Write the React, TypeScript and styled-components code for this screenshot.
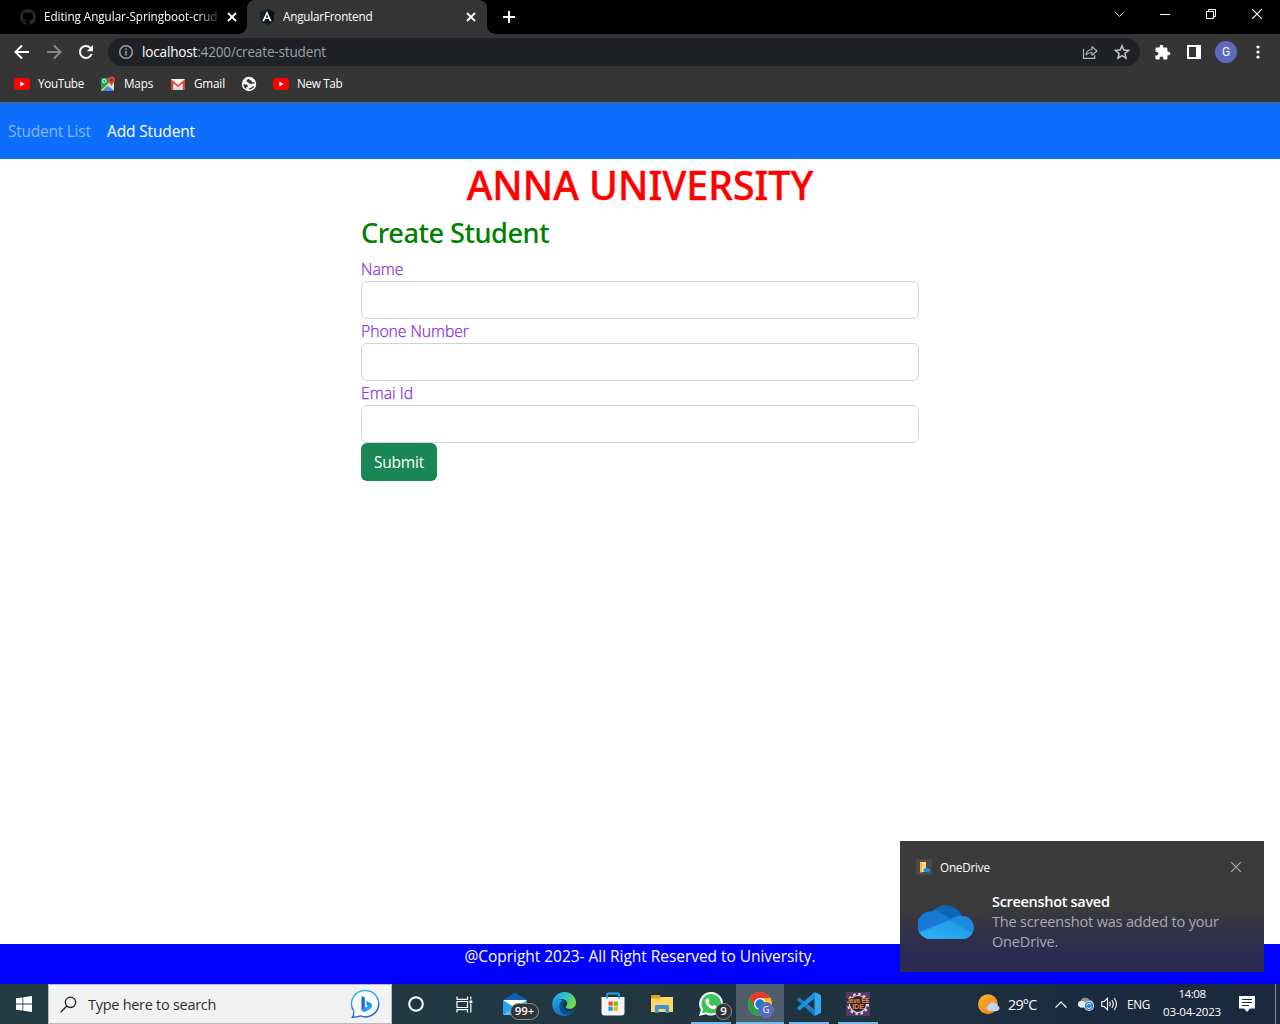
import React from "react";
import styled, { createGlobalStyle } from "styled-components";

const GlobalStyle = createGlobalStyle`
  * { box-sizing: border-box; }
  body { margin: 0; background: #fff; font-family: "Open Sans", "Noto Sans", sans-serif; overflow: hidden; }
  svg { display: block; flex: none; }
`;

const Screen = styled.div`
  width: 1280px;
  height: 1024px;
  display: flex;
  flex-direction: column;
  position: relative;
`;

/* ---------- Browser chrome ---------- */

const TabStrip = styled.div`
  height: 34px;
  background: #000;
  display: flex;
  color: #fff;
`;

const Tab = styled.div<{ $active?: boolean }>`
  width: ${(p) => (p.$active ? 240 : 247)}px;
  height: 34px;
  padding: 0 ${(p) => (p.$active ? 11 : 10)}px 0 ${(p) => (p.$active ? 12 : 20)}px;
  display: flex;
  align-items: center;
  background: ${(p) => (p.$active ? "#353535" : "#000")};
  border-radius: ${(p) => (p.$active ? "8px 8px 0 0" : "0")};
  position: relative;
`;

const TabFoot = styled.i<{ $side: "left" | "right" }>`
  position: absolute;
  bottom: 0;
  ${(p) => p.$side}: -8px;
  width: 8px;
  height: 8px;
  background: radial-gradient(
    circle at ${(p) => (p.$side === "left" ? "0 0" : "100% 0")},
    transparent 7.5px,
    #353535 8px
  );
`;

const TabTitle = styled.span<{ $spacing: number; $fade?: boolean }>`
  flex: 1;
  margin-left: 8px;
  padding-bottom: 2px;
  font-size: 11.7px;
  line-height: 16px;
  letter-spacing: ${(p) => p.$spacing}px;
  white-space: nowrap;
  overflow: hidden;
  ${(p) => p.$fade && "mask-image: linear-gradient(90deg, #000 152px, transparent 179px);"}
`;

const NewTab = styled.div`
  width: 44px;
  display: grid;
  place-items: center;
`;

const WindowButtons = styled.div`
  margin-left: auto;
  display: flex;
  height: 28px;
`;

const WindowButton = styled.div`
  width: 46px;
  display: grid;
  place-items: center;
`;

const Toolbar = styled.div`
  height: 34px;
  padding: 4px 6px 2px;
  background: #353535;
  display: flex;
  align-items: center;
`;

const ToolButton = styled.div`
  width: 32px;
  height: 28px;
  display: grid;
  place-items: center;
`;

const Omnibox = styled.div`
  width: 1032px;
  height: 28px;
  margin: 0 6px;
  padding: 0 2px 0 10px;
  border-radius: 14px;
  background: #202124;
  display: flex;
  align-items: center;
`;

const Url = styled.span`
  flex: 1;
  margin-left: 8px;
  color: #9aa0a6;
  font-size: 13.6px;
  line-height: 20px;
  letter-spacing: -0.19px;
  b { color: #fff; font-weight: 400; }
`;

const Avatar = styled.div`
  width: 22px;
  height: 22px;
  border-radius: 50%;
  background: #5c6bc0;
  color: #fff;
  font: 12px/22px Roboto, sans-serif;
  text-align: center;
`;

const Bookmarks = styled.div`
  height: 35px;
  padding: 0 14px 3px;
  background: #353535;
  border-bottom: 1px solid #5f5f5f;
  display: flex;
  align-items: center;
  color: #fff;
`;

const Bookmark = styled.div<{ $width: number; $spacing?: number }>`
  width: ${(p) => p.$width}px;
  display: flex;
  align-items: center;
  gap: 8px;
  font-size: 11.7px;
  line-height: 16px;
  letter-spacing: ${(p) => p.$spacing ?? 0}px;
  white-space: nowrap;
  span { padding-bottom: 2px; }
`;

/* ---------- Page ---------- */

const Navbar = styled.nav`
  height: 56px;
  background: #0d6efd;
  display: flex;
  align-items: center;
  padding: 0 8px 1px;
  gap: 16px;
`;

const NavLink = styled.a<{ $muted?: boolean }>`
  width: ${(p) => (p.$muted ? 83 : 90)}px;
  font-size: 15.5px;
  line-height: 24px;
  letter-spacing: ${(p) => (p.$muted ? -0.25 : -0.14)}px;
  white-space: nowrap;
  color: ${(p) => (p.$muted ? "#86b7fe" : "#fff")};
`;

const Page = styled.main`
  flex: 1;
  background: #fff;
`;

const Title = styled.h1`
  margin: 0 0 6px;
  padding-top: 2px;
  color: #f00;
  font: 500 39.2px/48px "Noto Sans", sans-serif;
  -webkit-text-stroke: 0.4px #f00;
  text-align: center;
`;

const Form = styled.form`
  width: 558px;
  margin: 0 auto;
`;

const Heading = styled.h2`
  margin: 0 0 7px;
  padding-top: 1px;
  color: green;
  font: 500 27.2px/34px "Noto Sans", sans-serif;
  letter-spacing: -0.48px;
`;

const Label = styled.label<{ $spacing?: number }>`
  display: block;
  height: 24px;
  color: blueviolet;
  font-size: 15.8px;
  font-weight: 300;
  line-height: 25px;
  letter-spacing: ${(p) => p.$spacing ?? 0}px;
  -webkit-text-stroke: 0.25px blueviolet;
`;

const Input = styled.input`
  display: block;
  width: 100%;
  height: 38px;
  border: 1px solid #ced4da;
  border-radius: 6px;
  background: #fff;
`;

const Submit = styled.button`
  width: 76px;
  height: 38px;
  padding: 0;
  border: 0;
  border-radius: 6px;
  background: #198754;
  color: #fff;
  font: 15.5px/38px "Open Sans", sans-serif;
  letter-spacing: -0.2px;
`;

const Footer = styled.footer`
  height: 40px;
  background: #00f;
  color: #fff;
  font-size: 15.5px;
  line-height: 25px;
  letter-spacing: -0.04px;
  text-align: center;
`;

/* ---------- Notification ---------- */

const Toast = styled.aside`
  position: absolute;
  left: 900px;
  top: 841px;
  width: 364px;
  height: 131px;
  padding: 18px 16px 0;
  background: linear-gradient(#3b3b3b 0 48%, #2b2a52 88%);
`;

const ToastHeader = styled.div`
  height: 16px;
  display: flex;
  align-items: center;
  gap: 8px;
  color: #fff;
  font-size: 11.7px;
  letter-spacing: -0.2px;
  span { flex: 1; }
`;

const ToastClose = styled.div`
  width: 24px;
  display: grid;
  place-items: center;
`;

const ToastBody = styled.div`
  display: flex;
  padding: 17px 0 0 2px;
  gap: 17px;
`;

const CloudSlot = styled.div`
  width: 57px;
  padding-top: 11px;
`;

const ToastText = styled.div`
  color: #a9a9af;
  font-size: 14.5px;
  line-height: 20px;
  letter-spacing: -0.17px;
  strong { display: block; color: #fff; font-weight: 600; letter-spacing: -0.31px; }
`;

/* ---------- Taskbar ---------- */

const Taskbar = styled.div`
  height: 40px;
  background: linear-gradient(90deg, #213a42 0, #203540 55%, #1b2b3f 85%, #1b283f 100%);
  display: flex;
  color: #fff;
`;

const TaskCell = styled.div`
  width: 48px;
  display: grid;
  place-items: center;
`;

const Search = styled.div`
  width: 344px;
  border: 1px solid #b9b9b9;
  background: #f2f2f2;
  padding: 0 11px;
  display: flex;
  align-items: center;
  color: #2f2f2f;
  font-size: 14.5px;
  letter-spacing: -0.28px;
  span { flex: 1; margin-left: 11px; }
`;

const Pinned = styled.div`
  margin-left: 3px;
  display: flex;
`;

const TaskApp = styled.div<{ $state?: "open" | "focused" }>`
  width: 48px;
  margin-right: 1px;
  display: grid;
  place-items: center;
  position: relative;
  background: ${(p) => (p.$state === "focused" ? "#4d5d69" : "transparent")};
  &::after {
    content: "";
    position: absolute;
    bottom: 0;
    height: 2px;
    left: ${(p) => (p.$state === "focused" ? 0 : 4)}px;
    right: ${(p) => (p.$state === "focused" ? 0 : 4)}px;
    background: ${(p) => (p.$state ? "#76b9ed" : "transparent")};
  }
`;

const Badge = styled.span<{ $left: number; $top: number; $width: number; $fill?: string }>`
  position: absolute;
  left: ${(p) => p.$left}px;
  top: ${(p) => p.$top}px;
  width: ${(p) => p.$width}px;
  height: ${(p) => (p.$fill ? 16 : 17)}px;
  border-radius: 9px;
  border: 1px solid ${(p) => p.$fill ?? "#8b9094"};
  background: ${(p) => p.$fill ?? "#303437"};
  color: #fff;
  font-size: ${(p) => (p.$fill ? 9 : 11.5)}px;
  font-weight: ${(p) => (p.$fill ? 400 : 600)};
  line-height: 14px;
  text-align: center;
`;

const Tray = styled.div`
  margin-left: auto;
  display: flex;
  align-items: center;
`;

const TrayCell = styled.div<{ $width: number; $start?: boolean }>`
  width: ${(p) => p.$width}px;
  display: flex;
  justify-content: ${(p) => (p.$start ? "flex-start" : "center")};
`;

const TrayText = styled.div<{ $width: number; $size?: number; $spacing?: number; $indent?: number }>`
  width: ${(p) => p.$width}px;
  padding-left: ${(p) => p.$indent ?? 0}px;
  font-size: ${(p) => p.$size ?? 11.7}px;
  letter-spacing: ${(p) => p.$spacing ?? -0.25}px;
  white-space: nowrap;
`;

const Clock = styled.div`
  width: 70px;
  font-size: 11.6px;
  line-height: 18px;
  letter-spacing: -0.27px;
  text-align: center;
  padding-bottom: 2px;
  time { display: block; }
  time:first-child { letter-spacing: -0.5px; }
`;

const DesktopPeek = styled.div`
  width: 5px;
  height: 40px;
  border-left: 1px solid #7d8794;
`;

/* ---------- Icons ---------- */

const Cross = ({ size, color = "#fff", width = 1.8 }: { size: number; color?: string; width?: number }) => (
  <svg width={size} height={size} viewBox="0 0 10 10">
    <path d="M1 1l8 8M9 1L1 9" stroke={color} strokeWidth={width} />
  </svg>
);

const GithubIcon = () => (
  <svg width="16" height="16" viewBox="0 0 16 16">
    <path
      fill="#24292f"
      d="M8 0C3.58 0 0 3.58 0 8c0 3.54 2.29 6.53 5.47 7.59.4.07.55-.17.55-.38 0-.19-.01-.82-.01-1.49-2.01.37-2.53-.49-2.69-.94-.09-.23-.48-.94-.82-1.13-.28-.15-.68-.52-.01-.53.63-.01 1.08.58 1.23.82.72 1.21 1.87.87 2.33.66.07-.52.28-.87.51-1.07-1.78-.2-3.64-.89-3.64-3.95 0-.87.31-1.59.82-2.15-.08-.2-.36-1.02.08-2.12 0 0 .67-.21 2.2.82.64-.18 1.32-.27 2-.27s1.36.09 2 .27c1.53-1.04 2.2-.82 2.2-.82.44 1.1.16 1.92.08 2.12.51.56.82 1.27.82 2.15 0 3.07-1.87 3.75-3.65 3.95.29.25.54.73.54 1.48 0 1.07-.01 1.93-.01 2.2 0 .21.15.46.55.38A8.01 8.01 0 0016 8c0-4.42-3.58-8-8-8z"
    />
  </svg>
);

const AngularIcon = () => (
  <svg width="16" height="16" viewBox="0 0 16 16">
    <path fill="#17202b" d="M8 .3l7.5 2.6-1.2 9.6L8 16l-6.3-3.5L.5 2.9z" />
    <path fill="#0a1119" d="M8 .3l7.5 2.6-1.2 9.6L8 16z" />
    <path fill="#fff" fillRule="evenodd" d="M8 2l4.6 10.3h-1.8l-.9-2.3H6.1l-.9 2.3H3.4zM8 5.300L6.700 8.500h2.600z" />
  </svg>
);

const ArrowIcon = ({ flip }: { flip?: boolean }) => (
  <svg width="16" height="16" viewBox="0 0 16 16" fill="none" stroke={flip ? "#868686" : "#fff"} strokeWidth="2">
    <path d={flip ? "M1 8h13M8 1.500L14.500 8 8 14.500" : "M15 8H2M8 1.500L1.500 8 8 14.500"} />
  </svg>
);

const ReloadIcon = () => (
  <svg width="16" height="16" viewBox="0 0 16 16">
    <path d="M13.6 10A6 6 0 1 1 12.4 3.9" fill="none" stroke="#fff" strokeWidth="2" />
    <path d="M15 1v6.200H8.800z" fill="#fff" />
  </svg>
);

const InfoIcon = () => (
  <svg width="16" height="16" viewBox="0 0 16 16" fill="none" stroke="#9aa0a6" strokeWidth="1.5">
    <circle cx="8" cy="8" r="6.3" />
    <path d="M8 7v4.500M8 4.300v1.700" />
  </svg>
);

const ShareIcon = () => (
  <svg width="16" height="16" viewBox="0 0 16 16" fill="none" stroke="#b4b6ba" strokeWidth="1.2">
    <path d="M1.500 5v9.400h11.200V11" />
    <path d="M4 10.800c.4-3.400 2.500-5.100 6-5.300V2.600L15 7l-5 4.200V8.500c-2.800 0-4.700.7-6 2.300z" strokeLinejoin="round" />
  </svg>
);

const StarIcon = () => (
  <svg width="16" height="16" viewBox="0 0 16 16" fill="none" stroke="#c3c5c8" strokeWidth="1.5">
    <path d="M8 1.800l1.800 4.300 4.700.4-3.600 3 1.100 4.600L8 11.700l-4 2.400 1.100-4.600-3.600-3 4.700-.4z" />
  </svg>
);

const PuzzleIcon = () => (
  <svg width="17" height="17" viewBox="0 0 24 24">
    <path
      fill="#fff"
      d="M20.500 11H19V7a2 2 0 0 0-2-2h-4V3.500a2.500 2.500 0 0 0-5 0V5H4a2 2 0 0 0-2 2v3.800h1.500a2.700 2.700 0 0 1 0 5.400H2V20a2 2 0 0 0 2 2h3.800v-1.500a2.700 2.700 0 0 1 5.400 0V22H17a2 2 0 0 0 2-2v-4h1.500a2.500 2.500 0 0 0 0-5z"
    />
  </svg>
);

const PanelIcon = () => (
  <svg width="14" height="14" viewBox="0 0 14 14">
    <path fill="#fff" fillRule="evenodd" d="M0 0h14v14H0zM2 2v10h7V2z" />
  </svg>
);

const DotsIcon = () => (
  <svg width="4" height="14" viewBox="0 0 4 14" fill="#fff">
    <circle cx="2" cy="2" r="1.6" />
    <circle cx="2" cy="7" r="1.6" />
    <circle cx="2" cy="12" r="1.6" />
  </svg>
);

const YoutubeIcon = () => (
  <svg width="16" height="12" viewBox="0 0 16 12">
    <rect width="16" height="12" rx="3" fill="#f00" />
    <path d="M6.300 3.500v5l4.300-2.500z" fill="#fff" />
  </svg>
);

const MapsIcon = () => (
  <svg width="16" height="16" viewBox="0 0 16 16">
    <rect x="1" y="2" width="13" height="13" rx="1" fill="#1ea362" />
    <path d="M1 14.500L13 2.500 14 3v3L4.500 15H2z" fill="#ffd84c" />
    <path d="M2 15l5.700-5.200L14 15z" fill="#4a89f3" />
    <path d="M8 10l6 4.500V5z" fill="#e0e0e0" />
    <circle cx="4.3" cy="5" r="1.7" fill="none" stroke="#fff" strokeWidth=".9" />
    <path d="M11.500.5a3.500 3.500 0 0 1 3.500 3.600c0 2.400-3 3.600-3.500 6.600C11 7.700 8 6.500 8 4.100A3.500 3.500 0 0 1 11.500.5z" fill="#db4437" />
    <circle cx="11.5" cy="4" r="1.2" fill="#7b231e" />
  </svg>
);

const GmailIcon = () => (
  <svg width="16" height="16" viewBox="0 0 16 16">
    <path d="M1 3h14v11H1z" fill="#eee" />
    <path d="M3 14l5-5 5 5z" fill="#d8d8d8" />
    <path d="M1 14V3.200L8 9l7-5.800V14h-2.300V7.200L8 11 3.300 7.200V14z" fill="#db4437" />
    <path d="M2.500 3h11L8 7.500z" fill="#f4f4f4" />
  </svg>
);

const GlobeIcon = () => (
  <svg width="16" height="16" viewBox="0 0 16 16">
    <circle cx="8" cy="8" r="7.2" fill="#fff" />
    <path
      d="M8.300 2.700C6.300 3.200 5.300 4 5.600 5.200c.3 1.200 1.800.7 2.300 1.700.4 1 1.600.9 3 .8l2.800-.2-.4-1.300-2.500-.3-.4-1.500-1.900-.4zM2.200 8.300l3.400.1 1.400 1.300-.4 1.300-1.500.4.200 1.800-2-1.700zM7.500 12.500l2.200-.5 1.600-1.500 2 .1c-1 1.700-2.700 2.900-5 3z"
      fill="#353535"
    />
  </svg>
);

const FolderCloudIcon = () => (
  <svg width="16" height="16" viewBox="0 0 16 16">
    <rect width="16" height="16" fill="#494949" />
    <path d="M4 3h6v10H4z" fill="#ffd978" />
    <path d="M4 3l2 1v10l-2-1z" fill="#f4b93c" />
    <path d="M8.500 13a1.700 1.700 0 0 1 0-3.200 2.300 2.300 0 0 1 4-.2 1.700 1.700 0 0 1 .2 3.400z" fill="#1e90e8" />
  </svg>
);

const OneDriveCloud = () => (
  <svg width="56" height="36" viewBox="0 0 56 36">
    <defs>
      <linearGradient id="cloudFront" x1="0" y1="1" x2="1" y2="0">
        <stop offset="0" stopColor="#2ab5f3" />
        <stop offset="1" stopColor="#2094e6" />
      </linearGradient>
      <clipPath id="cloudShape">
        <path d="M13.500 36A13.500 13.500 0 0 1 12.500 8.500L14.500 8.500A17.500 17.500 0 0 1 44 13A11.500 11.500 0 0 1 44.500 36z" />
      </clipPath>
    </defs>
    <g clipPath="url(#cloudShape)">
      <path d="M0 0h56v36H0z" fill="#0968b8" />
      <path d="M0 6h12c5 0 8 2 12 4.500L52 28v8H0z" fill="#1679d3" />
      <path d="M31 17l5-2.500c4-2 8-2 12-1.500h8v23H0V29z" fill="#1e8be2" />
      <path d="M0 30.500L32 17l24 14.500V36H0z" fill="url(#cloudFront)" />
    </g>
  </svg>
);

const WindowsIcon = () => (
  <svg width="16" height="16" viewBox="0 0 16 16" fill="#fff">
    <path d="M0 2.300L6.500 1.400v6.200H0zM7.300 1.300L16 0v7.600H7.300zM0 8.400h6.500v6.200L0 13.700zM7.300 8.400H16V16l-8.700-1.300z" />
  </svg>
);

const MagnifierIcon = () => (
  <svg width="17" height="17" viewBox="0 0 17 17" fill="none" stroke="#222" strokeWidth="1.3">
    <circle cx="10.5" cy="6.3" r="5.2" />
    <path d="M6.800 10L.7 16.200" />
  </svg>
);

const BingIcon = () => (
  <svg width="30" height="30" viewBox="0 0 30 30">
    <defs>
      <linearGradient id="bingRing" x1="0" y1="0" x2=".4" y2="1">
        <stop offset="0" stopColor="#38c6f0" />
        <stop offset="1" stopColor="#2464cf" />
      </linearGradient>
      <linearGradient id="bingMark" x1="0" y1="0" x2="1" y2="1">
        <stop offset="0" stopColor="#1b62df" />
        <stop offset="1" stopColor="#33c7ee" />
      </linearGradient>
    </defs>
    <path
      d="M16 1.500a13.200 13.200 0 1 1-5.500 25.400C8 28 5 28.400 2.500 28.300c1.200-1.500 1.500-3 1.200-6.500A13.200 13.200 0 0 1 16 1.500z"
      fill="#f8fbff"
      stroke="url(#bingRing)"
      strokeWidth="1.400"
    />
    <path d="M11.500 7l3.300 1.400v11l-3.300 2.200z" fill="#1769e0" />
    <path d="M16 12l4.500 2c2.800 1.800 1.500 5-.5 6.200l-5 2.800c-2 0-3.500-.8-3.500-2.700l6.500-3.100-1.200-.8z" fill="url(#bingMark)" />
  </svg>
);

const TaskViewIcon = () => (
  <svg width="17" height="17" viewBox="0 0 17 17" fill="none" stroke="#fff" strokeWidth="1.200">
    <path d="M1 .5v2.800h10.500V.5M1 16.500v-2.800h10.500v2.800M1 5.500h10.500v6H1zM14.800.5v3M14.800 8v8.500" />
    <path d="M13.500 4.500h2.800v2.800h-2.800z" fill="#fff" stroke="none" />
  </svg>
);

const MailIcon = () => (
  <svg width="24" height="24" viewBox="0 0 24 24">
    <path d="M0 8L12 .5 24 8v6H0z" fill="#0f5fb5" />
    <path d="M1 8h22v8H1z" fill="#fff" />
    <path d="M0 8l12 7.500V23H0z" fill="#2aa2ea" />
    <path d="M24 8l-12 7.500V23h12z" fill="#3fb6f2" />
    <path d="M0 23l12-8 12 8z" fill="#4cc3f7" />
  </svg>
);

const EdgeIcon = () => (
  <svg width="24" height="24" viewBox="0 0 24 24">
    <defs>
      <linearGradient id="edgeTop" x1="0" y1="0" x2="1" y2=".4">
        <stop offset="0" stopColor="#2196e0" />
        <stop offset=".55" stopColor="#2ac3d2" />
        <stop offset="1" stopColor="#6fdc4d" />
      </linearGradient>
      <linearGradient id="edgeLeft" x1="0" y1="0" x2=".6" y2="1">
        <stop offset="0" stopColor="#1ba2e6" />
        <stop offset="1" stopColor="#1268bd" />
      </linearGradient>
    </defs>
    <path d="M.2 11.500C0 18.500 5 24 12 24c4 0 8-2 10.300-5.500-4 2-9 1.500-11.300-2.500-1.300-2.500-.8-4.500.8-6.500C9 6 2.500 6.500.2 11.500z" fill="url(#edgeLeft)" />
    <path d="M9.200 9C6.500 12.500 7 18 10 21c3.500 3 9 1.500 12.300-2.300.3-.4 0-.8-.5-.6-4 1.900-8.800.9-10.800-2.600-1.300-2.500-.8-4.200.6-6z" fill="#0c4f97" />
    <path d="M.2 11.500C.8 5 6 0 12.200 0 19 0 24 4.800 24 10.500c0 4-3 6.300-6.200 6.300-2.500 0-4-.8-4-1.900 0-1 1.500-1.300 1.500-3.400C15.300 8.800 12.500 7 9 7 5 7 1.600 8.800.2 11.500z" fill="url(#edgeTop)" />
  </svg>
);

const StoreIcon = () => (
  <svg width="24" height="24" viewBox="0 0 24 24">
    <path d="M.5 5h23v15.500a3 3 0 0 1-3 3h-17a3 3 0 0 1-3-3z" fill="#f4f4f4" />
    <path d="M6 6.500V2.500a1 1 0 0 1 1-1h10a1 1 0 0 1 1 1v4" fill="none" stroke="#1fa4e4" strokeWidth="1.800" />
    <path d="M7.500 9.500h4.200v4.200H7.500z" fill="#f25022" />
    <path d="M12.700 9.500h4.200v4.200h-4.200z" fill="#7fba00" />
    <path d="M7.500 14.600h4.200v4.200H7.500z" fill="#00a4ef" />
    <path d="M12.700 14.600h4.200v4.200h-4.200z" fill="#ffb900" />
  </svg>
);

const ExplorerIcon = () => (
  <svg width="22" height="20" viewBox="0 0 22 20">
    <path d="M0 2a1 1 0 0 1 1-1h7.500L10 3h11a1 1 0 0 1 1 1v4H0z" fill="#e3a01b" />
    <path d="M0 4.500h8.500L10.500 3H22v15H0z" fill="#ffd767" />
    <path d="M4 19V12a1 1 0 0 1 1-1h12a1 1 0 0 1 1 1v7h-3.500v-4h-7v4z" fill="#3a96d8" />
  </svg>
);

const WhatsappIcon = () => (
  <svg width="24" height="24" viewBox="0 0 24 24">
    <path d="M12.200 0a11.800 11.800 0 1 1-5.600 22.200L0 24l1.800-6.300A11.800 11.800 0 0 1 12.200 0z" fill="#fff" />
    <path d="M12.200 2a9.800 9.800 0 1 1-5 18.200L3 21.200l1.100-4A9.800 9.800 0 0 1 12.200 2z" fill="#3cc458" />
    <path d="M8 6.500c.6-.4 1.300-.3 1.600.4l.8 2c.1.500-.8 1.300-1 1.700.8 1.800 2.200 3 4.100 3.800.5-.3 1-1.400 1.500-1.300l2.300 1.100c.5.300.3 1.500-.3 2.200-1 1-2.500 1.200-4.400.4-3-1.200-5-3.400-6-6C6 9 6.600 7.300 8 6.500z" fill="#fff" />
  </svg>
);

const ChromeIcon = () => (
  <svg width="24" height="24" viewBox="0 0 24 24">
    <circle cx="12" cy="12" r="12" fill="#fbc116" />
    <path d="M1.600 6A12 12 0 0 0 12 24l5.200-9L12 12z" fill="#2b9e4a" />
    <path d="M12 6h10.400a12 12 0 0 0-20.800 0l5.200 9z" fill="#e33b2e" />
    <circle cx="12" cy="12" r="6" fill="#fff" />
    <circle cx="12" cy="12" r="4.7" fill="#1a73e8" />
  </svg>
);

const VsCodeIcon = () => (
  <svg width="24" height="24" viewBox="0 0 24 24">
    <path d="M17.500 17.500V24L.4 8.400a.8.8 0 0 1 0-1.200l1.300-1.200a1 1 0 0 1 1.300 0z" fill="#1a80c4" />
    <path d="M17.500 6.500V0L.4 15.600a.8.8 0 0 0 0 1.200L1.700 18a1 1 0 0 0 1.300 0z" fill="#1a93de" />
    <path d="M17.500 0L24 3v18l-6.500 3z" fill="#2fa8f0" />
  </svg>
);

const EclipseIcon = () => (
  <svg width="24" height="24" viewBox="0 0 24 24">
    <rect width="24" height="24" fill="#54396a" />
    <circle cx="12" cy="12" r="10" fill="none" stroke="#e4e0e6" strokeWidth="2" strokeDasharray="2.600 2.636" />
    <circle cx="12" cy="12" r="8.5" fill="#2b2530" stroke="#ddd" strokeWidth="1.200" />
    <rect y="6" width="24" height="6" fill="#2b2228" opacity=".8" />
    <g fill="#f08a3c" fontFamily="Liberation Sans, sans-serif" fontWeight="700" textAnchor="middle">
      <text x="12" y="11" fontSize="6.500" textLength="23" lengthAdjust="spacingAndGlyphs">Java EE</text>
      <text x="12" y="17" fontSize="7">IDE</text>
    </g>
  </svg>
);

const SunIcon = () => (
  <svg width="23" height="21" viewBox="0 0 23 21">
    <defs>
      <linearGradient id="sun" x1="0" y1="0" x2="1" y2="1">
        <stop offset="0" stopColor="#fbb62d" />
        <stop offset="1" stopColor="#ee7b1a" />
      </linearGradient>
    </defs>
    <circle cx="10" cy="10.2" r="10" fill="url(#sun)" />
    <path d="M11 17a3 3 0 0 1-.3-5.800 4.600 4.600 0 0 1 8.600.2A2.900 2.900 0 0 1 19.500 17z" fill="#bcd6f7" />
  </svg>
);

const SyncCloudIcon = () => (
  <svg width="17" height="14" viewBox="0 0 17 14">
    <path d="M3.500 10.500a3.300 3.300 0 0 1 0-6.400A5 5 0 0 1 12.500 3a4 4 0 0 1 2 7.500z" fill="#8f9498" />
    <path d="M3.500 10.500a3.300 3.300 0 0 1 0-6.400c2-.5 4 0 5 1.500v5z" fill="#ececec" />
    <circle cx="12" cy="9" r="4.9" fill="#e8f3fc" />
    <circle cx="12" cy="9" r="4.2" fill="#2b84d0" />
    <path d="M9.500 8.500a2.600 2.600 0 0 1 4.500-1M14.500 9.500a2.600 2.600 0 0 1-4.500 1" fill="none" stroke="#fff" />
  </svg>
);

const SpeakerIcon = () => (
  <svg width="17" height="14" viewBox="0 0 17 14" fill="none" stroke="#fff" strokeWidth="1.100">
    <path d="M.8 4.500h2.400L6.500 1.300v11.400L3.200 9.500H.8zM8.500 4.800q1.500 2.200 0 4.400M10.800 3q3 4 0 8M13.200 1q4.600 6 0 12" />
  </svg>
);

const NotificationIcon = () => (
  <svg width="16" height="16" viewBox="0 0 16 16">
    <path d="M0 0h16v12.500h-5L8 16l-3-3.500H0z" fill="#fff" />
    <path d="M3 3.500h10M3 6.500h10M3 9.500h7" stroke="#1b2a3f" />
  </svg>
);

const Field = ({ label, spacing }: { label: string; spacing?: number }) => (
  <>
    <Label $spacing={spacing}>{label}</Label>
    <Input aria-label={label} />
  </>
);

const BrowserChrome = () => (
  <>
    <TabStrip>
      <Tab>
        <GithubIcon />
        <TabTitle $spacing={-0.05} $fade>Editing Angular-Springboot-crud</TabTitle>
        <Cross size={10} />
      </Tab>
      <Tab $active>
        <TabFoot $side="left" />
        <AngularIcon />
        <TabTitle $spacing={-0.2}>AngularFrontend</TabTitle>
        <Cross size={10} />
        <TabFoot $side="right" />
      </Tab>
      <NewTab>
        <svg width="12" height="12"><path d="M6 0v12M0 6h12" stroke="#fff" strokeWidth="2" /></svg>
      </NewTab>
      <WindowButtons>
        <WindowButton>
          <svg width="11" height="7"><path d="M.5.500l5 5 5-5" fill="none" stroke="#ccc" /></svg>
        </WindowButton>
        <WindowButton>
          <svg width="10" height="1"><path d="M0 .5h10" stroke="#fff" /></svg>
        </WindowButton>
        <WindowButton>
          <svg width="10" height="10" fill="none" stroke="#fff"><path d="M.5 2.500h7v7h-7zM2.500 2.500v-2h7v7h-2" /></svg>
        </WindowButton>
        <WindowButton><Cross size={12} width={1} /></WindowButton>
      </WindowButtons>
    </TabStrip>
    <Toolbar>
      <ToolButton><ArrowIcon /></ToolButton>
      <ToolButton><ArrowIcon flip /></ToolButton>
      <ToolButton><ReloadIcon /></ToolButton>
      <Omnibox>
        <InfoIcon />
        <Url><b>localhost</b>:4200/create-student</Url>
        <ToolButton><ShareIcon /></ToolButton>
        <ToolButton><StarIcon /></ToolButton>
      </Omnibox>
      <ToolButton><PuzzleIcon /></ToolButton>
      <ToolButton><PanelIcon /></ToolButton>
      <ToolButton><Avatar>G</Avatar></ToolButton>
      <ToolButton><DotsIcon /></ToolButton>
    </Toolbar>
    <Bookmarks>
      <Bookmark $width={86} $spacing={-0.3}><YoutubeIcon /><span>YouTube</span></Bookmark>
      <Bookmark $width={70} $spacing={-0.15}><MapsIcon /><span>Maps</span></Bookmark>
      <Bookmark $width={71} $spacing={-0.15}><GmailIcon /><span>Gmail</span></Bookmark>
      <Bookmark $width={32}><GlobeIcon /></Bookmark>
      <Bookmark $width={90} $spacing={-0.33}><YoutubeIcon /><span>New Tab</span></Bookmark>
    </Bookmarks>
  </>
);

export default function App() {
  return (
    <Screen>
      <GlobalStyle />
      <BrowserChrome />
      <Navbar>
        <NavLink $muted>Student List</NavLink>
        <NavLink>Add Student</NavLink>
      </Navbar>
      <Page>
        <Title>ANNA UNIVERSITY</Title>
        <Form>
          <Heading>Create Student</Heading>
          <Field label="Name" />
          <Field label="Phone Number" spacing={-0.08} />
          <Field label="Emai Id" />
          <Submit type="button">Submit</Submit>
        </Form>
      </Page>
      <Footer>@Copright 2023- All Right Reserved to University.</Footer>
      <Taskbar>
        <TaskCell><WindowsIcon /></TaskCell>
        <Search>
          <MagnifierIcon />
          <span>Type here to search</span>
          <BingIcon />
        </Search>
        <TaskCell>
          <svg width="16" height="16"><circle cx="8" cy="8" r="6.8" fill="none" stroke="#fff" strokeWidth="2" /></svg>
        </TaskCell>
        <TaskCell><TaskViewIcon /></TaskCell>
        <Pinned>
          <TaskApp><MailIcon /><Badge $left={19} $top={19} $width={29}>99+</Badge></TaskApp>
          <TaskApp><EdgeIcon /></TaskApp>
          <TaskApp><StoreIcon /></TaskApp>
          <TaskApp><ExplorerIcon /></TaskApp>
          <TaskApp $state="open"><WhatsappIcon /><Badge $left={28} $top={19} $width={17}>9</Badge></TaskApp>
          <TaskApp $state="focused"><ChromeIcon /><Badge $left={22} $top={18} $width={16} $fill="#5c6bc0">G</Badge></TaskApp>
          <TaskApp $state="open"><VsCodeIcon /></TaskApp>
          <TaskApp $state="open"><EclipseIcon /></TaskApp>
        </Pinned>
        <Tray>
          <TrayCell $width={30} $start><SunIcon /></TrayCell>
          <TrayText $width={41} $size={14.3} $spacing={-0.75}>29°C</TrayText>
          <TrayCell $width={24}>
            <svg width="12" height="7"><path d="M.5 6.500L6 1l5.500 5.500" fill="none" stroke="#fff" strokeWidth="1.200" /></svg>
          </TrayCell>
          <TrayCell $width={24}><SyncCloudIcon /></TrayCell>
          <TrayCell $width={24}><SpeakerIcon /></TrayCell>
          <TrayText $width={36} $indent={6}>ENG</TrayText>
          <Clock>
            <time>14:08</time>
            <time>03-04-2023</time>
          </Clock>
          <TrayCell $width={40}><NotificationIcon /></TrayCell>
          <TrayCell $width={8} />
          <DesktopPeek />
        </Tray>
      </Taskbar>
      <Toast>
        <ToastHeader>
          <FolderCloudIcon />
          <span>OneDrive</span>
          <ToastClose><Cross size={12} color="#aaa" width={1} /></ToastClose>
        </ToastHeader>
        <ToastBody>
          <CloudSlot><OneDriveCloud /></CloudSlot>
          <ToastText>
            <strong>Screenshot saved</strong>
            The screenshot was added to your
            <br />
            OneDrive.
          </ToastText>
        </ToastBody>
      </Toast>
    </Screen>
  );
}
